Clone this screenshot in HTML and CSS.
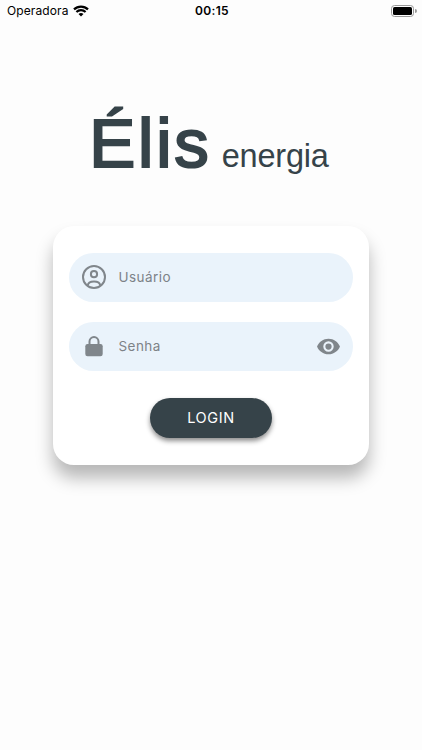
FILE: index.html
```html
<!DOCTYPE html>
<html lang="pt-BR">
<head>
  <meta charset="UTF-8">
  <title>Élis energia - Login</title>
  <meta name="viewport" content="width=device-width, initial-scale=1.0">
  <link rel="stylesheet" href="styles.css">
</head>
<body>
  <header class="status-bar">
    <div class="carrier">
      <span>Operadora</span>
      <svg class="wifi" viewBox="0 0 16 12">
        <path d="M1 4.4a10 10 0 0 1 14 0M3.4 7a6.6 6.6 0 0 1 9.2 0" fill="none" stroke="#000" stroke-width="2.2"/>
        <path d="M8 11.6L5.5 9.1a3.6 3.6 0 0 1 5 0z"/>
      </svg>
    </div>
    <span class="clock">00:15</span>
    <svg class="battery" viewBox="0 0 26 12">
      <rect x="0.5" y="0.5" width="22" height="11" rx="3" fill="none" stroke="#999"/>
      <rect x="2" y="2" width="19" height="8" rx="1.6"/>
      <path d="M24 4v4a2 2 0 0 0 0-4z" fill="#999"/>
    </svg>
  </header>

  <main>
    <h1 class="logo"><span class="brand">Élis</span><span class="tagline">energia</span></h1>

    <form class="card">
      <label class="field">
        <svg class="icon" viewBox="0 0 26 26" fill="none" stroke="#80868b" stroke-width="2">
          <circle cx="13" cy="13" r="11"/>
          <circle cx="13" cy="10.2" r="3.1"/>
          <path d="M6.8 21.5c.2-2.6 2.6-4 6.2-4s6 1.4 6.2 4"/>
        </svg>
        <input type="text" placeholder="Usuário">
      </label>
      <label class="field">
        <svg class="icon" viewBox="0 0 26 26">
          <path d="M8.5 11V8.6a4.5 4.5 0 0 1 9 0V11" fill="none" stroke="#80868b" stroke-width="2"/>
          <rect x="4.3" y="11" width="17.4" height="12.3" rx="2.2" fill="#80868b"/>
        </svg>
        <input type="password" placeholder="Senha">
        <svg class="eye" viewBox="0 0 24 24" fill="#80868b">
          <path d="M12 4.5C7 4.5 2.7 7.6 1 12c1.7 4.4 6 7.5 11 7.5s9.3-3.1 11-7.5c-1.7-4.4-6-7.5-11-7.5zM12 17a5 5 0 1 1 0-10 5 5 0 0 1 0 10zm0-8a3 3 0 1 0 0 6 3 3 0 0 0 0-6z"/>
        </svg>
      </label>
      <button type="button">LOGIN</button>
    </form>
  </main>
</body>
</html>
```
FILE: styles.css
```css
* {
  box-sizing: border-box;
}
body {
  margin: 0;
  height: 750px;
  background: #fdfdfd;
  font-family: Inter, sans-serif;
  overflow: hidden;
}
.status-bar {
  display: grid;
  grid-template-columns: 1fr auto 1fr;
  align-items: center;
  height: 22px;
  padding: 0 5px 1px 7px;
  font-size: 12px;
}
.carrier {
  display: flex;
  align-items: center;
  gap: 5px;
  letter-spacing: 0.1px;
}
.wifi {
  width: 16px;
  height: 12px;
}
.clock {
  font-weight: 600;
  letter-spacing: 0.3px;
}
.battery {
  width: 26px;
  height: 12px;
  justify-self: end;
}
main {
  display: flex;
  flex-direction: column;
  align-items: center;
}
.logo {
  display: flex;
  align-items: baseline;
  gap: 10px;
  height: 80px;
  margin: 82px 0 0;
  padding-right: 4px;
  font-family: "Liberation Sans", sans-serif;
  line-height: 80px;
  color: #364349;
}
.brand {
  font-size: 69px;
  font-weight: normal;
  letter-spacing: 2.8px;
  -webkit-text-stroke: 2.2px #364349;
}
.tagline {
  font-size: 32.5px;
  font-weight: normal;
  letter-spacing: -0.2px;
}
.card {
  display: flex;
  flex-direction: column;
  align-items: center;
  width: 316px;
  height: 238.5px;
  margin-top: 42px;
  padding: 27px 16px 0;
  border-radius: 21px;
  background: #fff;
  box-shadow: 0 13px 17px rgba(0, 0, 0, 0.28);
}
.field {
  display: flex;
  align-items: center;
  width: 284px;
  height: 48.5px;
  margin-bottom: 20.5px;
  padding: 0 12px;
  border-radius: 25px;
  background: #eaf3fb;
}
.icon {
  width: 26px;
  height: 26px;
  margin-right: 11px;
  margin-left: -0.5px;
}
.eye {
  width: 25px;
  height: 25px;
}
input {
  flex: 1;
  min-width: 0;
  padding: 0 0 1px 1px;
  border: none;
  outline: none;
  background: none;
  font-family: inherit;
  font-size: 13.5px;
  letter-spacing: 0.45px;
}
input::placeholder {
  color: #7d8287;
}
button {
  width: 122px;
  height: 40.5px;
  margin-top: 6.5px;
  padding: 0;
  border: none;
  border-radius: 21px;
  background: #364349;
  color: #fff;
  font-family: inherit;
  font-size: 14.5px;
  letter-spacing: 0.6px;
  box-shadow: 0 3px 5px rgba(0, 0, 0, 0.45);
}
```
